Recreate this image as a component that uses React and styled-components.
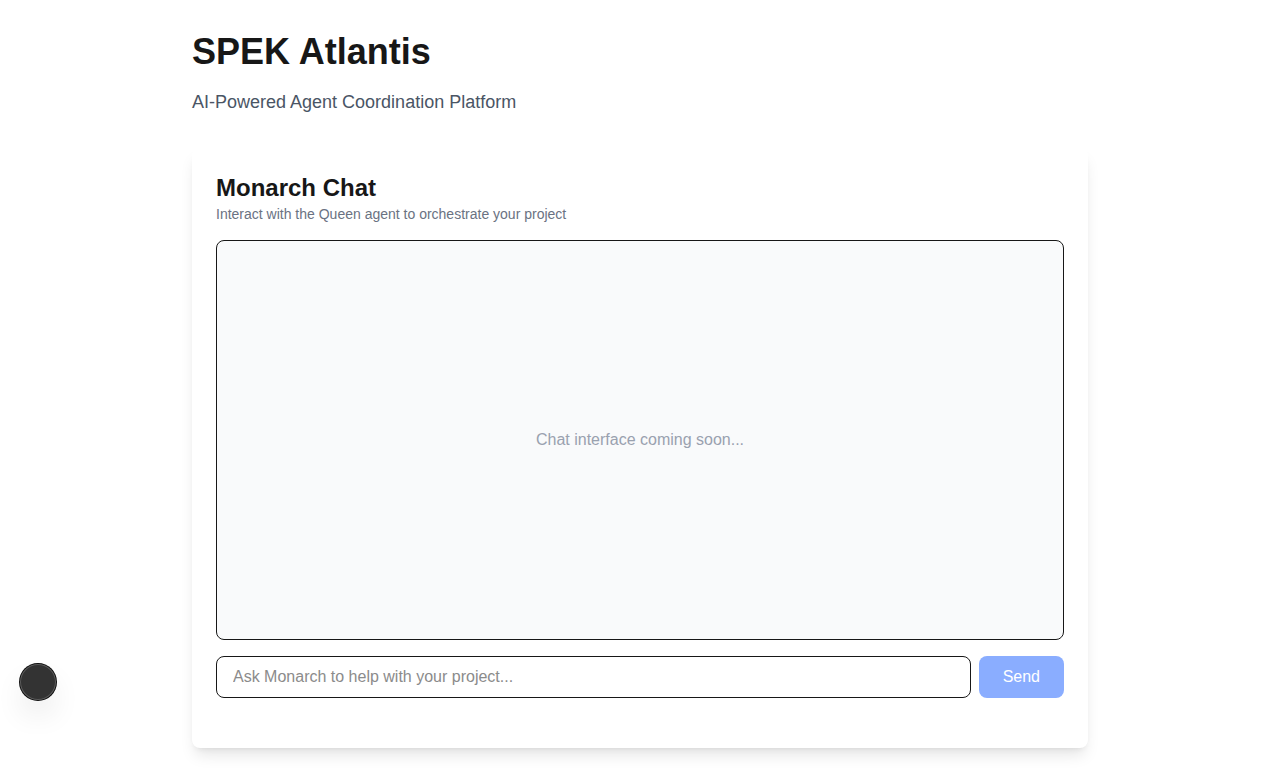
import React from "react";
import styled, { createGlobalStyle } from "styled-components";

const Global = createGlobalStyle`
  *, *::before, *::after { box-sizing: border-box; }
  body {
    margin: 0;
    background: #fff;
    color: #171717;
    font-family: Arial, "Liberation Sans", Helvetica, sans-serif;
    font-size: 16px;
    line-height: 24px;
    overflow: hidden;
  }
  h1, h2, p { margin: 0; }
`;

const Page = styled.main`
  min-height: 780px;
  padding: 32px;
`;

const Container = styled.div`
  width: 896px;
  margin: 0 auto;
`;

const Header = styled.header`
  margin-bottom: 32px;
`;

const Title = styled.h1`
  margin-bottom: 16px;
  font-size: 36px;
  line-height: 40px;
  font-weight: 700;
`;

const Tagline = styled.p`
  font-size: 18px;
  line-height: 28px;
  color: #4a5565;
`;

const Card = styled.section`
  height: 600px;
  padding: 24px;
  border-radius: 8px;
  background: #fff;
  box-shadow: 0 10px 15px -3px rgba(0, 0, 0, 0.1), 0 4px 6px -4px rgba(0, 0, 0, 0.1);
`;

const CardHeader = styled.div`
  margin-bottom: 16px;
`;

const CardTitle = styled.h2`
  font-size: 24px;
  line-height: 32px;
  font-weight: 700;
`;

const CardText = styled.p`
  font-size: 14px;
  line-height: 20px;
  color: #6a7282;
`;

const Messages = styled.div`
  display: flex;
  align-items: center;
  justify-content: center;
  height: 400px;
  margin-bottom: 16px;
  border: 1px solid #171717;
  border-radius: 8px;
  background: #f9fafb;
  color: #99a1af;
`;

const Composer = styled.form`
  display: flex;
  gap: 8px;
`;

const Input = styled.input`
  flex: 1;
  height: 42px;
  padding: 8px 16px;
  border: 1px solid #171717;
  border-radius: 8px;
  background: #fff;
  font: inherit;
  outline: none;
  &::placeholder { color: #8b8b8b; opacity: 1; }
`;

const SendButton = styled.button`
  height: 42px;
  padding: 8px 24px;
  border: 0;
  border-radius: 8px;
  background: #8aadff;
  color: #fff;
  font: inherit;
`;

const FloatingBadge = styled.div`
  position: fixed;
  left: 20px;
  bottom: 80px;
  width: 36px;
  height: 36px;
  border-radius: 50%;
  background: #333;
  box-shadow: 0 0 0 1px #0c0c0c, inset 0 0 0 1px rgba(255, 255, 255, 0.2), 0 16px 32px -8px rgba(0, 0, 0, 0.24);
`;

export default function App() {
  return (
    <>
      <Global />
      <Page>
        <Container>
          <Header>
            <Title>SPEK Atlantis</Title>
            <Tagline>AI-Powered Agent Coordination Platform</Tagline>
          </Header>
          <Card>
            <CardHeader>
              <CardTitle>Monarch Chat</CardTitle>
              <CardText>Interact with the Queen agent to orchestrate your project</CardText>
            </CardHeader>
            <Messages>Chat interface coming soon...</Messages>
            <Composer>
              <Input placeholder="Ask Monarch to help with your project..." />
              <SendButton type="button">Send</SendButton>
            </Composer>
          </Card>
        </Container>
      </Page>
      <FloatingBadge />
    </>
  );
}
